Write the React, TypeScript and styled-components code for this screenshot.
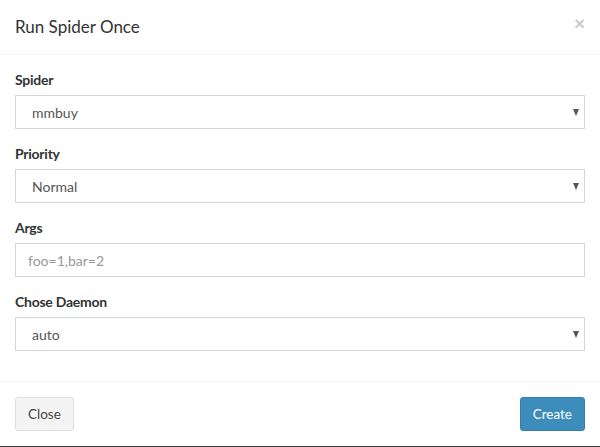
import React from "react";
import styled, { createGlobalStyle } from "styled-components";

const Global = createGlobalStyle`
  html, body { margin: 0; padding: 0; background: #fff; }
  body { font-family: "Source Sans Pro", Lato, "Liberation Sans", sans-serif; font-size: 14px; color: #333; }
  * { box-sizing: border-box; }
`;

const Modal = styled.div`
  width: 600px;
  height: 447px;
  background: #fff;
  border-bottom: 1px solid #3a3a3a;
  display: flex;
  flex-direction: column;
`;

const Header = styled.div`
  height: 55px;
  padding: 0 15px;
  border-bottom: 1px solid #f4f4f4;
  display: flex;
  align-items: center;
  justify-content: space-between;
`;

const Title = styled.h4`
  margin: 0;
  font-size: 17px;
  font-weight: 400;
  color: #333;
  line-height: 24px;
`;

const CloseX = styled.span`
  font-size: 19px;
  font-weight: 700;
  color: #000;
  opacity: 0.2;
  line-height: 1;
  margin-top: -8px;
  margin-right: 0;
  font-family: "Liberation Sans", sans-serif;
`;

const Body = styled.div`
  padding: 15px;
  display: flex;
  flex-direction: column;
`;

const Group = styled.div`
  margin-bottom: 15px;
  display: flex;
  flex-direction: column;
`;

const Label = styled.label`
  font-weight: 700;
  font-size: 14px;
  letter-spacing: -0.25px;
  line-height: 20px;
  margin-bottom: 5px;
  color: #333;
`;

const Field = styled.div<{ $placeholder?: boolean; $select?: boolean }>`
  height: 34px;
  border: 1px solid #d2d6de;
  padding: 0 ${(p) => (p.$select ? "16px" : "12px")};
  display: flex;
  align-items: center;
  justify-content: space-between;
  font-size: 14px;
  color: ${(p) => (p.$placeholder ? "#999" : "#555")};
`;

const Caret = styled.span`
  width: 0;
  height: 0;
  border-left: 3.5px solid transparent;
  border-right: 3.5px solid transparent;
  border-top: 7px solid #555;
  margin-right: -11px;
`;

const Footer = styled.div`
  border-top: 1px solid #f4f4f4;
  margin-top: auto;
  padding: 15px;
  display: flex;
  justify-content: space-between;
`;

const Button = styled.button<{ $primary?: boolean }>`
  height: 34px;
  padding: 0 12px;
  font-family: inherit;
  font-size: 13.5px;
  border-radius: 3px;
  border: 1px solid ${(p) => (p.$primary ? "#367fa9" : "#ddd")};
  background: ${(p) => (p.$primary ? "#3c8dbc" : "#f4f4f4")};
  color: ${(p) => (p.$primary ? "#fff" : "#444")};
`;

const fields = [
  { label: "Spider", value: "mmbuy", select: true },
  { label: "Priority", value: "Normal", select: true },
  { label: "Args", value: "foo=1,bar=2", placeholder: true },
  { label: "Chose Daemon", value: "auto", select: true },
];

export default function App() {
  return (
    <>
      <Global />
      <Modal>
        <Header>
          <Title>Run Spider Once</Title>
          <CloseX>×</CloseX>
        </Header>
        <Body>
          {fields.map((f) => (
            <Group key={f.label}>
              <Label>{f.label}</Label>
              <Field $select={f.select} $placeholder={f.placeholder}>
                <span>{f.value}</span>
                {f.select && <Caret />}
              </Field>
            </Group>
          ))}
        </Body>
        <Footer>
          <Button>Close</Button>
          <Button $primary>Create</Button>
        </Footer>
      </Modal>
    </>
  );
}
